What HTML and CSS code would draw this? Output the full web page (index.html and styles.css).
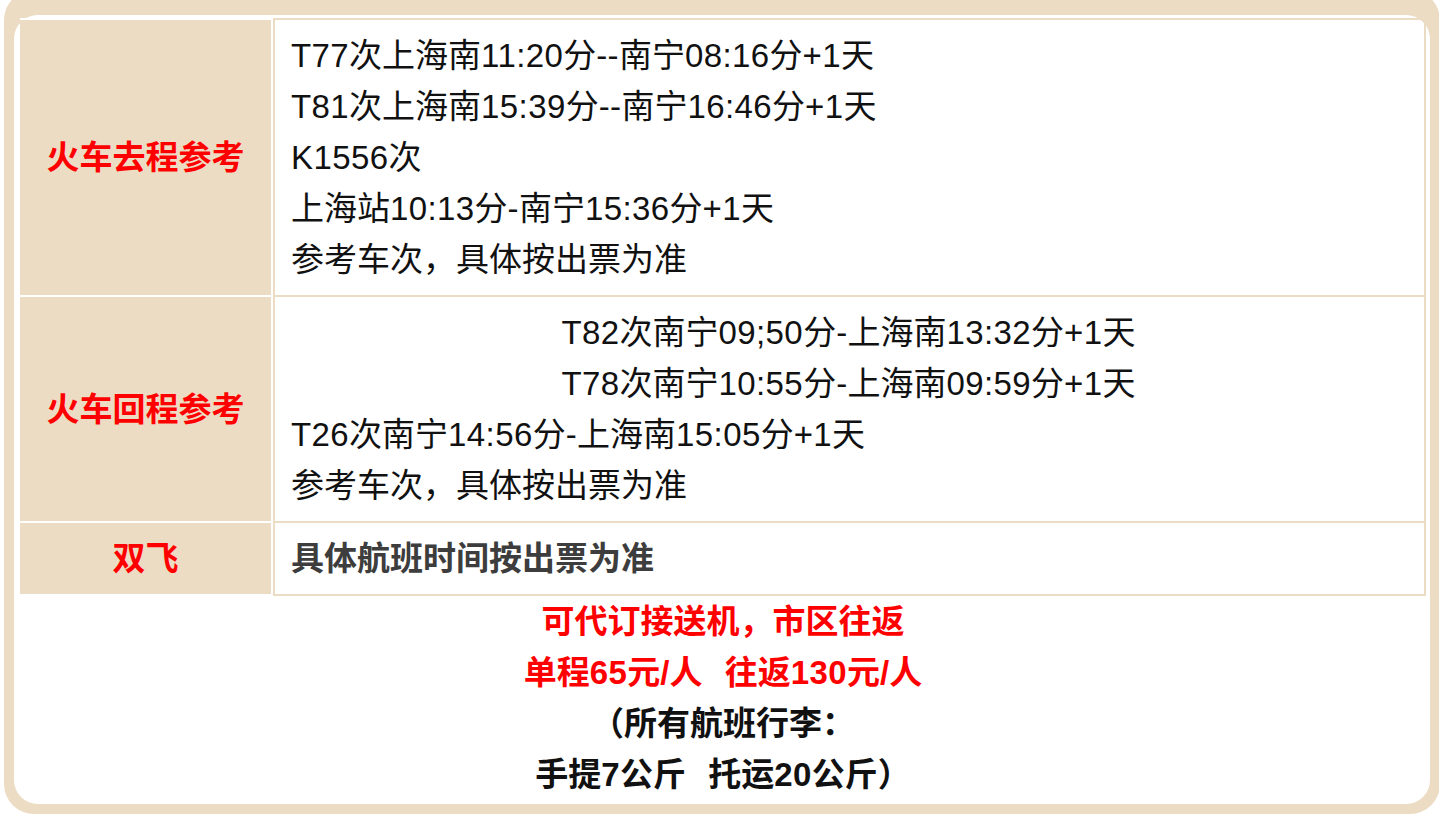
FILE: index.html
```html
<!DOCTYPE html>
<html lang="zh-CN">
<head>
<meta charset="utf-8">
<title>交通参考</title>
<link rel="stylesheet" href="styles.css">
</head>
<body>
<div class="frame">
  <div class="card">
    <table class="info">
      <tr>
        <td class="label">火车去程参考</td>
        <td class="value">
          <p><span class="n">T77</span>次上海南<span class="n">11:20</span>分<span class="n">--</span>南宁<span class="n">08:16</span>分<span class="n">+1</span>天<br><span class="n">T81</span>次上海南<span class="n">15:39</span>分<span class="n">--</span>南宁<span class="n">16:46</span>分<span class="n">+1</span>天<br><span class="n">K1556</span>次<br>上海站<span class="n">10:13</span>分<span class="n">-</span>南宁<span class="n">15:36</span>分<span class="n">+1</span>天<br>参考车次，具体按出票为准</p>
        </td>
      </tr>
      <tr>
        <td class="label">火车回程参考</td>
        <td class="value">
          <p class="center"><span class="n">T82</span>次南宁<span class="n">09;50</span>分<span class="n">-</span>上海南<span class="n">13:32</span>分<span class="n">+1</span>天<br><span class="n">T78</span>次南宁<span class="n">10:55</span>分<span class="n">-</span>上海南<span class="n">09:59</span>分<span class="n">+1</span>天</p>
          <p><span class="n">T26</span>次南宁<span class="n">14:56</span>分<span class="n">-</span>上海南<span class="n">15:05</span>分<span class="n">+1</span>天<br>参考车次，具体按出票为准</p>
        </td>
      </tr>
      <tr class="last">
        <td class="label">双飞</td>
        <td class="value"><p class="strong">具体航班时间按出票为准</p></td>
      </tr>
    </table>
    <div class="notes">
      <p class="red">可代订接送机，市区往返</p>
      <p class="red">单程<span class="n">65</span>元/人<span class="gap">&nbsp;&nbsp;</span>往返<span class="n">130</span>元/人</p>
      <p class="black">（所有航班行李：</p>
      <p class="black">手提<span class="n">7</span>公斤<span class="gap">&nbsp;&nbsp;</span>托运<span class="n">20</span>公斤）</p>
    </div>
  </div>
</div>
</body>
</html>
```
FILE: styles.css
```css
html, body {
  margin: 0;
  padding: 0;
  background: #ffffff;
  overflow: hidden;
}
body {
  font-family: "Liberation Sans", Arial, "Noto Sans CJK SC", sans-serif;
  font-size: 33px;
  line-height: 51px;
  color: #111111;
}
p { margin: 0; }
.n { letter-spacing: 0.4px; }
.gap { letter-spacing: 2px; }
.frame {
  margin: -10px 0 0 4px;
  width: 1436px;
  background: #eddcc4;
  border-radius: 30px;
  padding: 25px 10px 10px 10px;
  box-sizing: border-box;
}
.card {
  background: #ffffff;
  border-radius: 24px;
  padding: 3px 4px 4px 6px;
}
.info {
  border-collapse: separate;
  border-spacing: 0;
  width: 1406px;
  table-layout: fixed;
}
.info td {
  padding: 10px 18px 10px 16px;
  vertical-align: middle;
}
.info .label {
  width: 253px;
  box-sizing: border-box;
  padding: 10px 0;
  background: #eddcc4;
  border-top: 2px solid #ffffff;
  border-right: 2px solid #ffffff;
  text-align: center;
  color: #ff0000;
  font-weight: bold;
}
.info .value {
  border-top: 2px solid #eddcc4;
  border-right: 2px solid #eddcc4;
  border-left: 2px solid #eddcc4;
  color: #111111;
}
.info .last .label { border-bottom: 2px solid #ffffff; }
.info .last .value { border-bottom: 2px solid #eddcc4; }
.center { text-align: center; }
.strong { font-weight: bold; color: #3d3d3d; }
.notes {
  text-align: center;
  font-weight: bold;
}
.notes .red { color: #ff0000; }
.notes .black { color: #111111; }
```
